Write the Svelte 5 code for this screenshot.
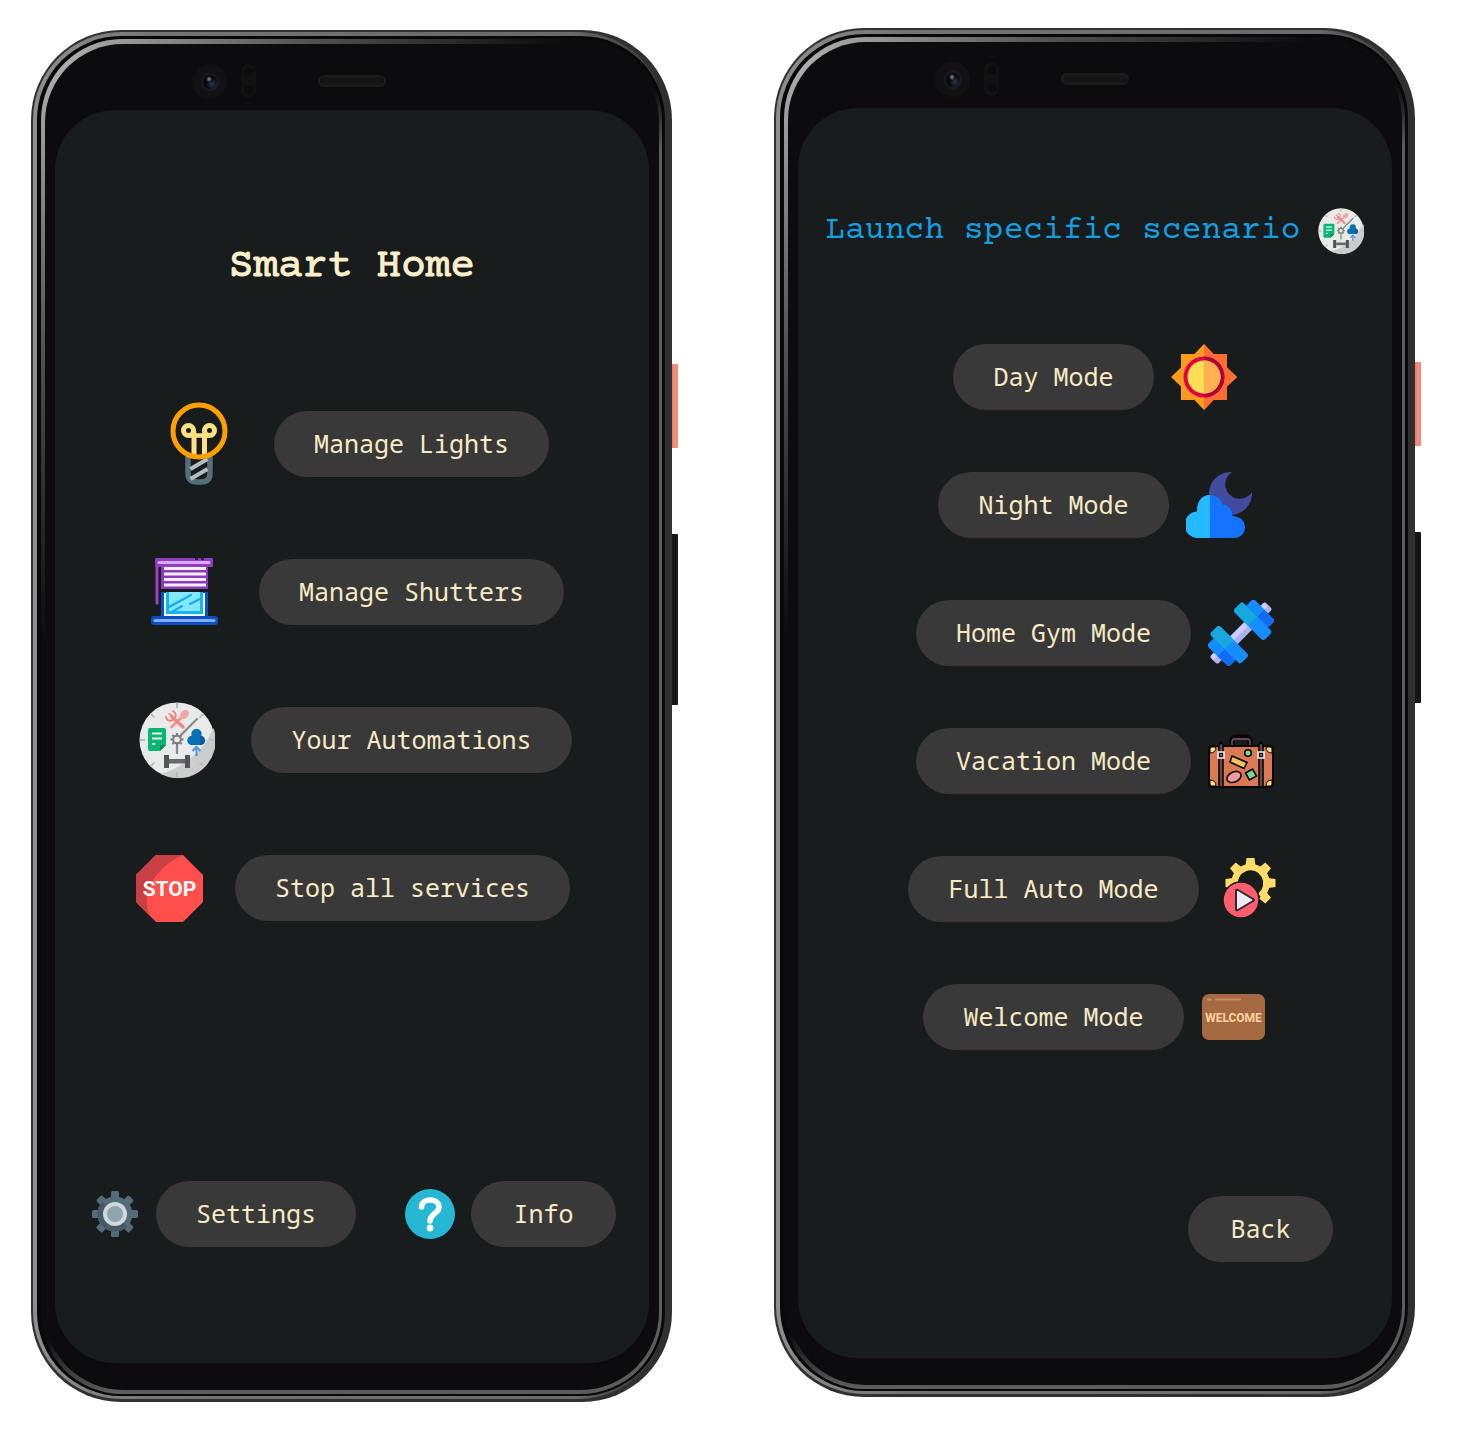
<script>
  const mainActions = [
    { label: 'Manage Lights', icon: 'bulb' },
    { label: 'Manage Shutters', icon: 'shutter' },
    { label: 'Your Automations', icon: 'clock' },
    { label: 'Stop all services', icon: 'stop' },
  ];

  const scenarios = [
    { label: 'Day Mode', icon: 'sun' },
    { label: 'Night Mode', icon: 'night' },
    { label: 'Home Gym Mode', icon: 'dumbbell' },
    { label: 'Vacation Mode', icon: 'suitcase' },
    { label: 'Full Auto Mode', icon: 'auto' },
    { label: 'Welcome Mode', icon: 'welcome' },
  ];

  const eighths = [0, 45, 90, 135, 180, 225, 270, 315];
</script>

{#snippet clock(size)}
  <svg width={size} height={size} viewBox="0 0 76 76" aria-hidden="true">
    <circle cx="38" cy="38" r="37.500" fill="#e9eaea" />
    <path d="M74.500 26A37.500 37.500 0 0 1 22 72C45 65 64 50 74.500 26Z" fill="#cbcccc" />
    {#each eighths as a}
      <path d="M38 1v5" stroke="#b9bcbd" stroke-width="2" transform={`rotate(${a} 38 38)`} />
    {/each}
    <g stroke="#f09a97" stroke-linecap="round" fill="none">
      <path d="M32.500 25L43 15" stroke-width="3" />
      <path d="M44 25L33 15" stroke-width="3.500" stroke="#ee8885" />
      <path d="M27 15c1 4 5 5 8 2s2-6-1-8M30.500 12l4 4" stroke-width="2" stroke="#ee8885" />
    </g>
    <ellipse cx="45.500" cy="12.500" rx="5" ry="3.800" transform="rotate(-45 45.500 12.500)" fill="#f2a5a2" />
    <path d="M11 26h14a2 2 0 0 1 2 2v15l-6 6H11a2 2 0 0 1-2-2V28a2 2 0 0 1 2-2Z" fill="#08b573" />
    <path d="M27 43l-6 6v-6Z" fill="#078b56" />
    <path d="M13 31.500h10M13 36.500h10M13 42h3" stroke="#e3f7ee" stroke-width="2.200" />
    <path d="M42 33L58 17" stroke="#85898c" stroke-width="2.200" stroke-linecap="round" />
    <path d="M38 44v8" stroke="#85898c" stroke-width="2.200" />
    <circle cx="38" cy="37.500" r="3.800" fill="none" stroke="#7c8082" stroke-width="2" />
    {#each eighths as a}
      <path d="M38 31v2.500" stroke="#7c8082" stroke-width="2.200" transform={`rotate(${a} 38 37.500)`} />
    {/each}
    <circle cx="57.500" cy="32" r="5.200" fill="#0870b4" />
    <circle cx="53" cy="38.500" r="4.700" fill="#0870b4" />
    <circle cx="61.500" cy="38.500" r="4.700" fill="#07609d" />
    <path d="M53 33h8v10H53Z" fill="#0870b4" />
    <path d="M57.500 54v-8M53.500 49l4-4 4 4" fill="none" stroke="#4f9dd4" stroke-width="2.200" />
    <path d="M25 53h5v13h-5ZM46 53h5v13h-5Z" fill="#515456" />
    <path d="M30 57h16v4.500H30Z" fill="#666a6c" />
  </svg>
{/snippet}

{#snippet icon(name)}
  {#if name === 'bulb'}
    <svg width="58" height="84" viewBox="0 0 58 84" aria-hidden="true">
      <path d="M18 54v17q0 9 9 9h4q9 0 9-9V54" fill="none" stroke="#546e7a" stroke-width="5.500" />
      <path d="M20.500 67l17-10M20.500 77l17-10" stroke="#b0bec5" stroke-width="4" />
      <g fill="none" stroke="#ffe082" stroke-width="5">
        <path d="M24 54V33.500M34.500 54V33.500" />
        <path d="M18.500 33.500h21M24 34v-5M34.500 34v-5" stroke-width="4.500" />
        <circle cx="18.500" cy="28.500" r="5" />
        <circle cx="39.500" cy="28.500" r="5" />
      </g>
      <circle cx="29" cy="29" r="26" fill="none" stroke="#ff9f00" stroke-width="5" />
    </svg>
  {:else if name === 'shutter'}
    <svg width="67" height="68" viewBox="0 0 67 68" aria-hidden="true">
      <path d="M6 4v41" stroke="#9c42c4" stroke-width="3" stroke-linecap="round" />
      <rect x="4" y="0" width="58" height="9" rx="1" fill="#8e3cc0" />
      <path d="M8 4.500h50" stroke="#dca8f3" stroke-width="3" stroke-linecap="round" />
      <path d="M44 0h3v2h-3ZM50 0h3v2h-3Z" fill="#282034" />
      <path d="M10 9h47v22H10Z" fill="#8b39be" />
      <path d="M13 10.500h42M13 16h42M13 21.500h42M13 27h42" stroke="#f7eefb" stroke-width="2.800" />
      <path d="M10 34h47v25H10Z" fill="#0d52c2" />
      <path d="M13 35h41v23H13Z" fill="#f1faff" />
      <path d="M15 34h37v22H15Z" fill="#15b4f5" />
      <path d="M18 34h31v19H18Z" fill="#85e7fc" />
      <path d="M18 49L40 37M21 54l10-6M39 46l10-5" stroke="#14aaf0" stroke-width="2.200" stroke-linecap="round" />
      <rect x="0" y="58" width="67" height="9" rx="3" fill="#0c4fc0" />
      <path d="M4 62.500h59" stroke="#85a9ff" stroke-width="3" stroke-linecap="round" />
    </svg>
  {:else if name === 'clock'}
    {@render clock(76)}
  {:else if name === 'stop'}
    <svg width="67" height="67" viewBox="0 0 67 67" aria-hidden="true">
      <path d="M20 0h27l20 20v27L47 67H20L0 47V20Z" fill="#ff4f4d" />
      <path d="M20 0h27C21 12 5 34 13 60L0 47V20Z" fill="#c94044" />
      <text class="stop-text" x="33.500" y="41" text-anchor="middle">STOP</text>
    </svg>
  {:else if name === 'gear'}
    <svg width="46" height="46" viewBox="0 0 46 46" aria-hidden="true">
      {#each eighths as a}
        <path d="M19 8V1.500q0-1.500 1.500-1.500h5q1.500 0 1.500 1.500V8Z" fill="#526d79" transform={`rotate(${a} 23 23)`} />
      {/each}
      <circle cx="23" cy="23" r="17.500" fill="#526d79" />
      <path d="M10.600 35.400A17.500 17.500 0 0 1 10.600 10.600L23 23l12.400 12.400a17.500 17.500 0 0 1-24.800 0Z" fill="#455b65" />
      <circle cx="23" cy="23" r="10" fill="#90a4ae" stroke="#cfd8dc" stroke-width="4" />
    </svg>
  {:else if name === 'question'}
    <svg width="50" height="50" viewBox="0 0 50 50" aria-hidden="true">
      <circle cx="25" cy="25" r="25" fill="#25b7d3" />
      <path d="M16.500 18c0-9.500 17.500-9.500 17.500 0 0 7-9 6-9 14" fill="none" stroke="#fff" stroke-width="5.500" stroke-linecap="round" />
      <circle cx="25" cy="39" r="3.400" fill="#fff" />
    </svg>
  {:else if name === 'sun'}
    <svg width="66" height="66" viewBox="0 0 66 66" aria-hidden="true">
      <path d="M33 0l9.500 10H56v13.500L66 33l-10 9.500V56H42.500L33 66l-9.500-10H10V42.500L0 33l10-9.500V10h13.500Z" fill="#ff9a21" />
      <path d="M33 0l9.500 10H56v13.500L66 33l-10 9.500V56H42.500L33 66Z" fill="#ff6d33" />
      <circle cx="33" cy="33" r="20.500" fill="#df0046" />
      <path d="M33 12.500a20.500 20.500 0 0 1 0 41Z" fill="#b00038" />
      <circle cx="33" cy="33" r="16.500" fill="#ffdc52" />
      <path d="M33 16.500a16.500 16.500 0 0 1 0 33Z" fill="#ffb050" />
    </svg>
  {:else if name === 'night'}
    <svg width="66" height="66" viewBox="0 0 66 66" aria-hidden="true">
      <path d="M46 0A21.500 21.500 0 1 0 66 20A14.500 14.500 0 1 1 46 0Z" fill="#414b9f" />
      <path d="M13 66a13 13 0 0 1-2-26.500C11 29 16 23 24 23c6 0 11 4 12.500 9.500 6 .5 9.500 5 10 11.500C54 44 59 49 59 55s-4 11-11 11Z" fill="#1473ff" />
      <path d="M13 66a13 13 0 0 1-2-26.500C11 29 16 23 24 23v43Z" fill="#25b9ff" />
    </svg>
  {:else if name === 'dumbbell'}
    <svg width="66" height="66" viewBox="0 0 66 66" aria-hidden="true">
      <g transform="rotate(-45 33 33)">
        <rect x="-6" y="27.500" width="78" height="11" rx="2.500" fill="#b1b0ef" />
        <path d="M-5 28H71v5H-6Z" fill="#cdccfa" />
        <rect x="0" y="17.500" width="12" height="31" rx="3" fill="#116cf2" />
        <rect x="10" y="11.500" width="13" height="43" rx="3" fill="#168dff" />
        <path d="M3 17.500h7V33H0V20.500q0-3 3-3Z" fill="#168dff" />
        <path d="M13 11.500h7q3 0 3 3V33H10V14.500q0-3 3-3Z" fill="#17a8dd" />
        <rect x="54" y="17.500" width="12" height="31" rx="3" fill="#116cf2" />
        <rect x="43" y="11.500" width="13" height="43" rx="3" fill="#168dff" />
        <path d="M46 11.500h7q3 0 3 3V33H43V14.500q0-3 3-3Z" fill="#17a8dd" />
        <path d="M56 17.500h7q3 0 3 3V33H56Z" fill="#168dff" />
      </g>
    </svg>
  {:else if name === 'suitcase'}
    <svg width="66" height="66" viewBox="0 0 66 66" aria-hidden="true">
      <path d="M24 19v-6q0-4 4-4h10q4 0 4 4v6" fill="none" stroke="#070506" stroke-width="5" />
      <path d="M24 19v-5q0-3 3-3h12q3 0 3 3v5" fill="none" stroke="#67484f" stroke-width="1.800" />
      <rect x="1" y="18" width="64" height="41" rx="3" fill="#d97a54" stroke="#070506" stroke-width="2" />
      <path d="M2 25q6 0 6-6H4q-2 0-2 2ZM64 25q-6 0-6-6h4q2 0 2 2ZM2 52q6 0 6 6H4q-2 0-2-2ZM64 52q-6 0-6 6h4q2 0 2-2Z" fill="#f6dc8b" stroke="#070506" stroke-width="1" />
      <path d="M11 59V17l2-3 2 3v42ZM51 59V17l2-3 2 3v42Z" fill="#67484f" stroke="#070506" stroke-width="1.600" />
      <path d="M10 24h6v6h-6ZM50 24h6v6h-6Z" fill="#1b1517" stroke="#edf1f4" stroke-width="1.600" />
      <path d="M12.500 27h1M52.500 27h1" stroke="#fff" stroke-width="1.500" />
      <path d="M24 28l15 6.500-3 6-14-6.500Z" fill="#f4c35c" stroke="#070506" stroke-width="1.600" />
      <circle cx="40" cy="25" r="3.300" fill="#7bd88f" stroke="#070506" stroke-width="1.600" />
      <ellipse cx="26" cy="49" rx="7.500" ry="5" transform="rotate(-25 26 49)" fill="#f79a9d" stroke="#070506" stroke-width="1.600" />
      <path d="M37.500 45l7-4 4 7-7 4Z" fill="#7bd88f" stroke="#070506" stroke-width="1.600" />
    </svg>
  {:else if name === 'auto'}
    <svg width="66" height="66" viewBox="0 0 66 66" aria-hidden="true">
      {#each [-90, -45, 0, 45, 90, 135] as a}
        <path d="M29.500 10l1-8h8l1 8Z" fill="#ffdc68" transform={`rotate(${a} 34.500 27)`} />
      {/each}
      <path d="M19 31A16 16 0 1 1 44 40" fill="none" stroke="#ffdc68" stroke-width="6.500" />
      <circle cx="25" cy="44" r="18" fill="#ff5d6c" stroke="#171c1c" stroke-width="1.500" />
      <path d="M20 35v18q0 2 2 1l15-9q2-1 0-2L22 34q-2-1-2 1Z" fill="#e9edf2" stroke="#302931" stroke-width="2" stroke-linejoin="round" />
    </svg>
  {:else if name === 'welcome'}
    <svg width="66" height="66" viewBox="0 0 66 66" aria-hidden="true">
      <rect x="1" y="10" width="63" height="46" rx="7" fill="#a66a42" />
      <path d="M7 15.500h3M15 15.500h24" stroke="#c98d61" stroke-width="2" stroke-linecap="round" />
      <text class="welcome-text" x="32.500" y="38" text-anchor="middle">WELCOME</text>
    </svg>
  {/if}
{/snippet}

{#snippet phone(kind, content)}
  <section class={`phone ${kind}`}>
    <div class="rim">
      <div class="groove">
        <div class="shine">
          <div class="face">
            <div class="sensors" aria-hidden="true">
              <span class="camera"></span>
              <span class="proximity"></span>
              <span class="speaker"></span>
            </div>
            <div class="screen">
              {@render content()}
            </div>
          </div>
        </div>
      </div>
    </div>
    <span class="key power"></span>
    <span class="key volume"></span>
  </section>
{/snippet}

{#snippet home()}
  <h1>Smart Home</h1>
  <div class="actions">
    {#each mainActions as item}
      <div class="row">
        <span class={`slot ${item.icon}`}>{@render icon(item.icon)}</span>
        <button type="button">{item.label}</button>
      </div>
    {/each}
  </div>
  <div class="footer">
    <div class="pair">
      <span class="small-slot">{@render icon('gear')}</span>
      <button type="button">Settings</button>
    </div>
    <div class="pair">
      <span class="small-slot">{@render icon('question')}</span>
      <button type="button">Info</button>
    </div>
  </div>
{/snippet}

{#snippet launch()}
  <header>
    <h2>Launch specific scenario</h2>
    {@render clock(46)}
  </header>
  <div class="scenarios">
    {#each scenarios as item}
      <div class="scenario">
        <button type="button">{item.label}</button>
        {@render icon(item.icon)}
      </div>
    {/each}
  </div>
  <div class="back">
    <button type="button">Back</button>
  </div>
{/snippet}

<main>
  {@render phone('first', home)}
  {@render phone('second', launch)}
</main>

<style>
  :global(body) {
    margin: 0;
    background: #fff;
  }
  main {
    display: flex;
    align-items: flex-start;
    gap: 102px;
    padding: 28px 43px 34px 31px;
  }
  svg {
    display: block;
    flex: none;
  }
  .phone {
    position: relative;
    flex: 1;
    min-width: 610px;
    box-sizing: border-box;
    padding: 2px 6px 3px 2px;
    border-radius: 90px;
    background: #303031;
  }
  .first {
    margin-top: 2px;
  }
  .rim {
    padding: 4px 1px 3px 4px;
    border-radius: 88px;
    background: linear-gradient(90deg, #8e8e8e, #747474 20%, #6a6a6a 85%, #303031);
  }
  .groove {
    padding: 3px 3px 2px 4px;
    border-radius: 84px;
    background: #08080a;
  }
  .shine {
    padding: 5px 3px 4px 4px;
    border-radius: 81px;
    background:
      radial-gradient(ellipse 520px 600px at 0 0, #b8b8b8, #555 50%, transparent),
      linear-gradient(to bottom, transparent 50px, #5c5c5c 110px) right / 50% 100% no-repeat,
      linear-gradient(to bottom, transparent 96%, #606060) #0c0c0e;
  }
  .face {
    padding: 0 10px 27px;
    border-radius: 78px;
    background: #0c0c0e;
  }
  .sensors {
    display: flex;
    align-items: center;
    height: 40px;
    padding: 17px 0 9px 137px;
  }
  .camera {
    width: 35px;
    height: 35px;
    border-radius: 50%;
    background:
      radial-gradient(circle at 17px 15px, #90949c 0, transparent 3px),
      radial-gradient(circle at 20px 20px, #293651 0, transparent 6px),
      radial-gradient(circle at 18px 18px, #07080b 6px, #1c1d20 8px, #121214 10px);
  }
  .proximity {
    width: 15px;
    height: 34px;
    margin-left: 14px;
    border-radius: 8px;
    background:
      radial-gradient(circle at 8px 8px, #0c0c0e 4px, transparent 5px),
      radial-gradient(circle at 8px 26px, #0c0c0e 4px, transparent 5px),
      #121213;
  }
  .speaker {
    box-sizing: border-box;
    width: 68px;
    height: 12px;
    margin-left: 62px;
    border: 2px solid #1c1c1d;
    border-radius: 6px;
    background: #161617;
  }
  .screen {
    display: flex;
    flex-direction: column;
    border-radius: 60px;
    background: #181c1c;
  }
  .first .screen {
    padding: 133px 0 116px;
  }
  .second .screen {
    padding: 100px 0 96px;
  }
  .key {
    position: absolute;
    left: 100%;
    width: 6px;
    border-radius: 0 1px 1px 0;
  }
  .power {
    top: 334px;
    height: 84px;
    background: linear-gradient(90deg, #e47f69, #f4917b 50%, #ed8872);
  }
  .volume {
    top: 504px;
    height: 171px;
    background: #151617;
  }
  h1,
  h2 {
    margin: 0;
    font-family: 'Courier Prime', 'Liberation Mono', monospace;
    font-weight: 400;
    white-space: nowrap;
    -webkit-text-stroke: 1px currentColor;
  }
  h1 {
    text-align: center;
    font-size: 41px;
    line-height: 48px;
    color: #fcf0cb;
  }
  h2 {
    font-size: 33px;
    line-height: 46px;
    color: #149fe3;
    -webkit-text-stroke-width: 0;
  }
  button {
    min-width: 145px;
    height: 66px;
    padding: 0 40px 2px;
    border: 0;
    border-radius: 33px;
    background: #393939;
    color: #f7ebc5;
    font-family: 'Noto Sans Mono', 'Droid Sans Mono', 'DejaVu Sans Mono', monospace;
    font-size: 25px;
    line-height: 32px;
    white-space: nowrap;
    cursor: pointer;
  }
  .actions {
    display: flex;
    flex-direction: column;
    gap: 58px;
    margin-top: 108px;
  }
  .row {
    display: flex;
    align-items: center;
    justify-content: center;
    gap: 30px;
    height: 90px;
  }
  .slot {
    display: flex;
    justify-content: center;
    width: 89px;
  }
  .slot.stop {
    width: 71px;
  }
  .footer {
    display: flex;
    justify-content: center;
    gap: 49px;
    margin-top: 248px;
    padding-left: 2px;
  }
  .pair {
    display: flex;
    align-items: center;
    gap: 16px;
  }
  .small-slot {
    display: flex;
    justify-content: center;
    width: 50px;
  }
  header {
    display: flex;
    align-items: center;
    justify-content: center;
    gap: 18px;
  }
  .scenarios {
    display: flex;
    flex-direction: column;
    gap: 62px;
    margin-top: 90px;
  }
  .scenario {
    display: flex;
    align-items: center;
    justify-content: center;
    gap: 17px;
  }
  .back {
    display: flex;
    justify-content: flex-end;
    margin-top: 146px;
    padding-right: 59px;
  }
  .stop-text {
    fill: #fff;
    font: 700 21px Roboto, sans-serif;
  }
  .welcome-text {
    fill: #ffd3a0;
    font: 700 12px Roboto, sans-serif;
  }
</style>
